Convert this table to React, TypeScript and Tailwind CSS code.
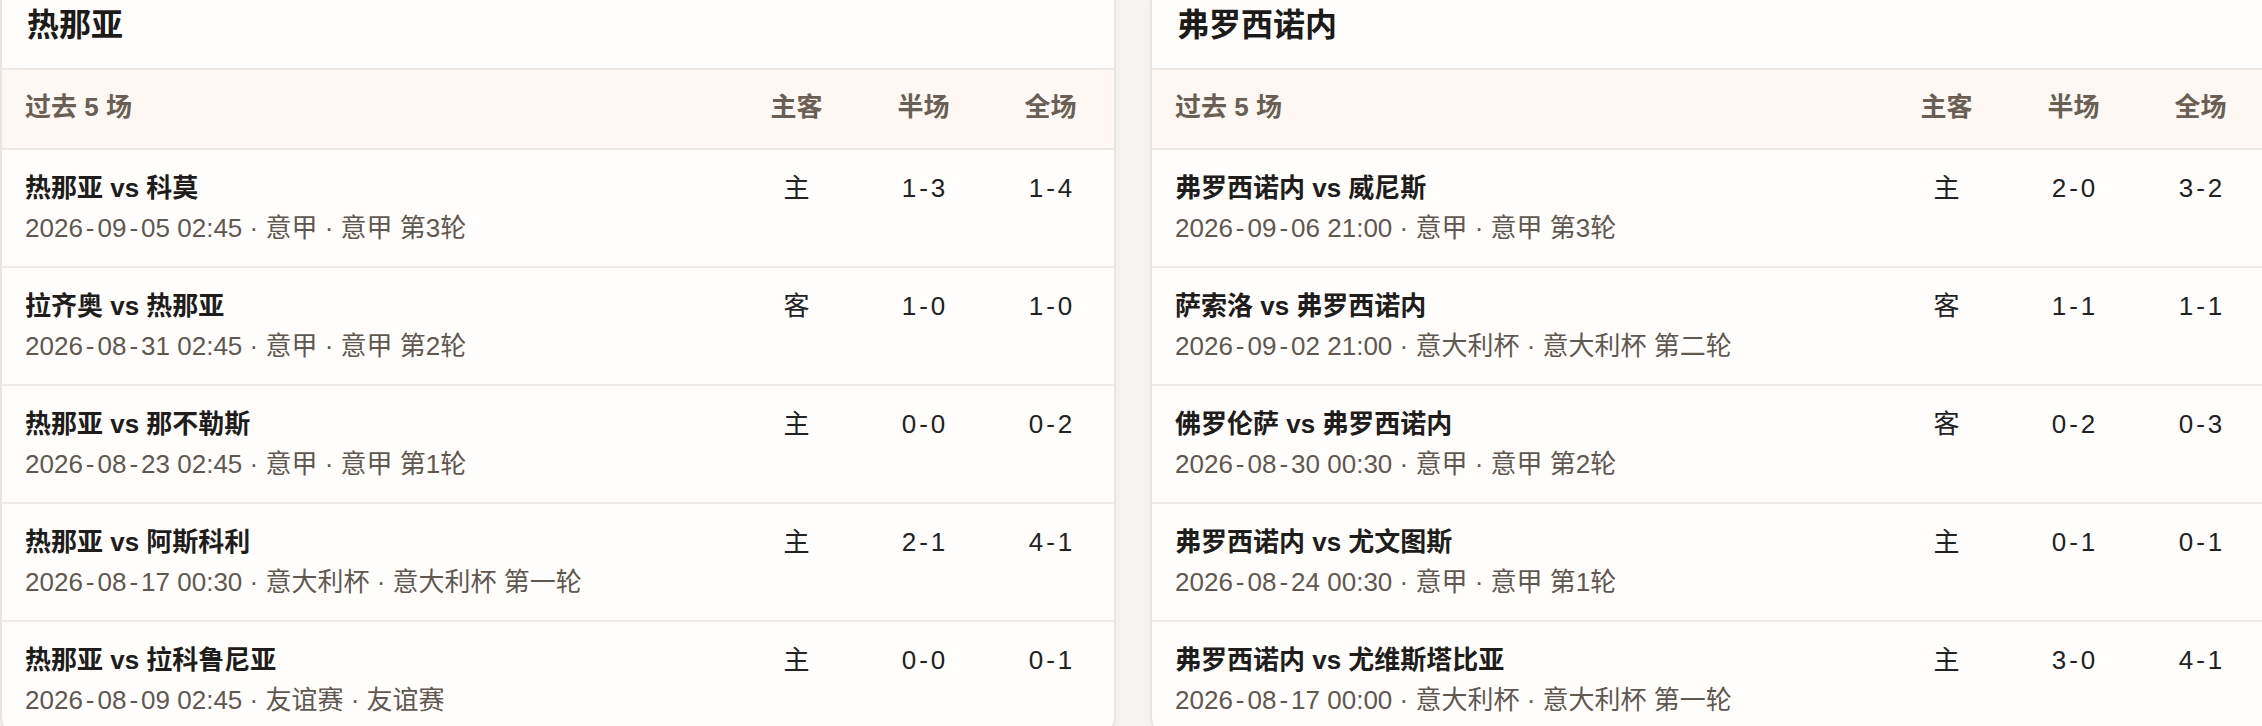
import { Fragment } from "react";

type Match = {
  title: string;
  meta: string;
  side: "主" | "客";
  half: string;
  full: string;
};

type Team = { name: string; matches: Match[] };

const TEAMS: Team[] = [
  {
    name: "热那亚",
    matches: [
      { title: "热那亚 vs 科莫", meta: "2026-09-05 02:45 · 意甲 · 意甲 第3轮", side: "主", half: "1-3", full: "1-4" },
      { title: "拉齐奥 vs 热那亚", meta: "2026-08-31 02:45 · 意甲 · 意甲 第2轮", side: "客", half: "1-0", full: "1-0" },
      { title: "热那亚 vs 那不勒斯", meta: "2026-08-23 02:45 · 意甲 · 意甲 第1轮", side: "主", half: "0-0", full: "0-2" },
      { title: "热那亚 vs 阿斯科利", meta: "2026-08-17 00:30 · 意大利杯 · 意大利杯 第一轮", side: "主", half: "2-1", full: "4-1" },
      { title: "热那亚 vs 拉科鲁尼亚", meta: "2026-08-09 02:45 · 友谊赛 · 友谊赛", side: "主", half: "0-0", full: "0-1" },
    ],
  },
  {
    name: "弗罗西诺内",
    matches: [
      { title: "弗罗西诺内 vs 威尼斯", meta: "2026-09-06 21:00 · 意甲 · 意甲 第3轮", side: "主", half: "2-0", full: "3-2" },
      { title: "萨索洛 vs 弗罗西诺内", meta: "2026-09-02 21:00 · 意大利杯 · 意大利杯 第二轮", side: "客", half: "1-1", full: "1-1" },
      { title: "佛罗伦萨 vs 弗罗西诺内", meta: "2026-08-30 00:30 · 意甲 · 意甲 第2轮", side: "客", half: "0-2", full: "0-3" },
      { title: "弗罗西诺内 vs 尤文图斯", meta: "2026-08-24 00:30 · 意甲 · 意甲 第1轮", side: "主", half: "0-1", full: "0-1" },
      { title: "弗罗西诺内 vs 尤维斯塔比亚", meta: "2026-08-17 00:00 · 意大利杯 · 意大利杯 第一轮", side: "主", half: "3-0", full: "4-1" },
    ],
  },
];

// hyphens in the original font are wider, so pad them a little
function Dashed({ text }: { text: string }) {
  const parts = text.split("-");
  return (
    <>
      {parts.map((p, i) => (
        <Fragment key={i}>
          {i > 0 && <span className="mx-[3px]">-</span>}
          {p}
        </Fragment>
      ))}
    </>
  );
}

function Meta({ text }: { text: string }) {
  const [date, ...rest] = text.split(" · ");
  return (
    <>
      <Dashed text={date} />
      {rest.map((p, i) => (
        <Fragment key={i}>
          {" · "}
          {p}
        </Fragment>
      ))}
    </>
  );
}

function TeamCard({ team }: { team: Team }) {
  return (
    <div className="w-[1116px] shrink-0 h-[742px] rounded-b-[26px] border-2 border-t-0 border-[#e9e5e0] bg-[#fffefd] shadow-[0_2px_10px_rgba(60,40,20,0.04)] overflow-hidden">
      {/* Title */}
      <div className="h-[68px] pl-[25px] pt-[6px]">
        <h2 className="text-[32px] leading-[38px] font-bold text-[#1c1b1a]">{team.name}</h2>
      </div>

      {/* Header */}
      <div className="grid grid-cols-[1fr_127px_127px_127px] items-center h-[82px] pb-[4px] border-y-2 border-[#ece8e3] bg-[#fdf8f3] text-[26px] font-semibold text-[#6a5f55]">
        <span className="pl-[23px]">过去 5 场</span>
        <span className="text-center">主客</span>
        <span className="text-center">半场</span>
        <span className="text-center">全场</span>
      </div>

      {/* Rows */}
      {team.matches.map((m) => (
        <div
          key={m.title + m.meta}
          className="grid grid-cols-[1fr_127px_127px_127px] items-start h-[118px] pt-[20px] border-b-2 border-[#efebe6]"
        >
          <div className="pl-[23px]">
            <p className="text-[26px] leading-[36px] font-bold text-[#1f1d1b]">{m.title}</p>
            <p className="mt-[4px] text-[26px] leading-[36px] text-[#5f5850]">
              <Meta text={m.meta} />
            </p>
          </div>
          <span className="text-center text-[26px] leading-[36px] text-[#222]">{m.side}</span>
          <span className="text-center text-[26px] leading-[36px] text-[#222]">
            <Dashed text={m.half} />
          </span>
          <span className="text-center text-[26px] leading-[36px] text-[#222]">
            <Dashed text={m.full} />
          </span>
        </div>
      ))}
    </div>
  );
}

export default function App() {
  return (
    <div className="w-[2262px] h-[726px] overflow-hidden bg-[#f7f5f2] font-['Liberation_Sans','Noto_Sans_CJK_SC',sans-serif]">
      <div className="flex gap-[34px]">
        {TEAMS.map((t) => (
          <TeamCard key={t.name} team={t} />
        ))}
      </div>
    </div>
  );
}
